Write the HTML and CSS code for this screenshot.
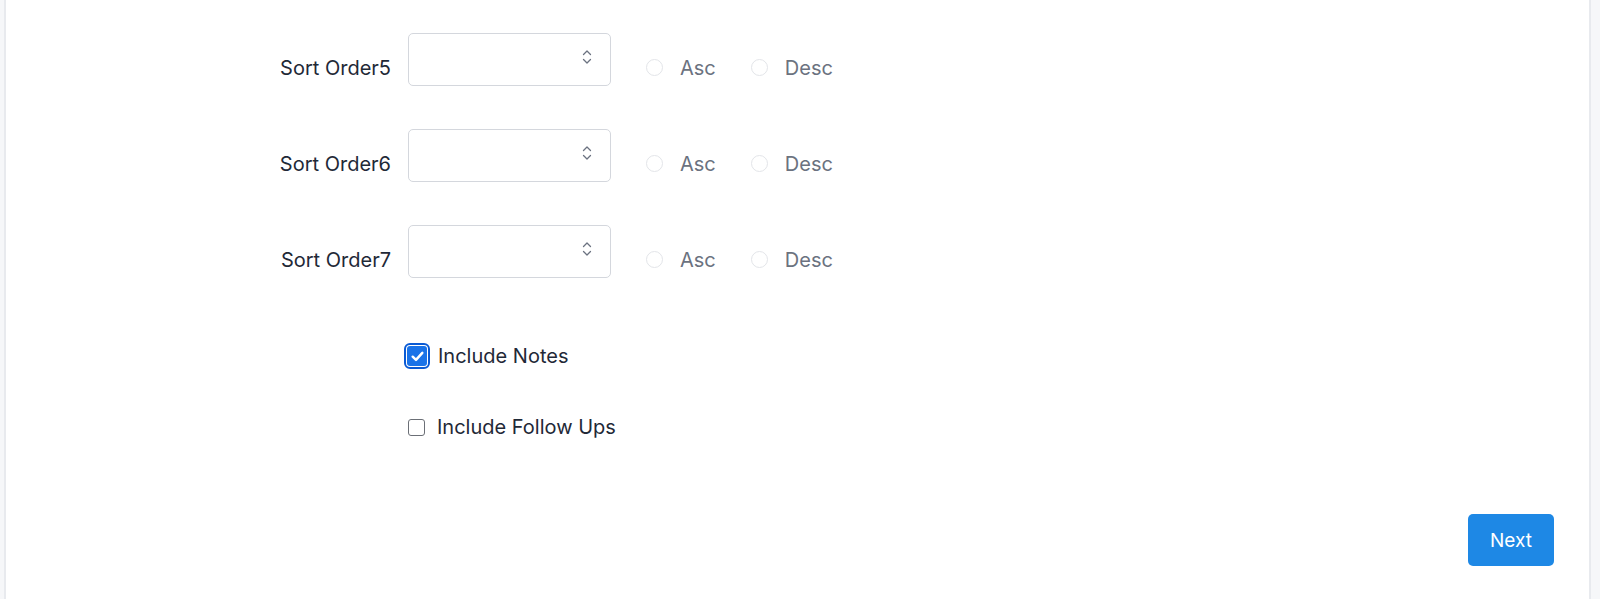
FILE: index.html
```html
<!DOCTYPE html>
<html>
<head>
<meta charset="utf-8">
<link rel="stylesheet" href="styles.css">
</head>
<body>
<div class="page">
  <div class="card">
    <div class="form">
      <div class="row">
        <label class="label">Sort Order5</label>
        <div class="select"><svg class="chev" width="10" height="16" viewBox="0 0 10 16"><path d="M1.5 5.5 L5 2 L8.5 5.5 M1.5 10.5 L5 14 L8.5 10.5" fill="none" stroke="#6b7280" stroke-width="1.3" stroke-linecap="round" stroke-linejoin="round"/></svg></div>
        <div class="radios">
          <span class="radio"></span><span class="rtext">Asc</span>
          <span class="radio"></span><span class="rtext">Desc</span>
        </div>
      </div>
      <div class="row">
        <label class="label">Sort Order6</label>
        <div class="select"><svg class="chev" width="10" height="16" viewBox="0 0 10 16"><path d="M1.5 5.5 L5 2 L8.5 5.5 M1.5 10.5 L5 14 L8.5 10.5" fill="none" stroke="#6b7280" stroke-width="1.3" stroke-linecap="round" stroke-linejoin="round"/></svg></div>
        <div class="radios">
          <span class="radio"></span><span class="rtext">Asc</span>
          <span class="radio"></span><span class="rtext">Desc</span>
        </div>
      </div>
      <div class="row">
        <label class="label">Sort Order7</label>
        <div class="select"><svg class="chev" width="10" height="16" viewBox="0 0 10 16"><path d="M1.5 5.5 L5 2 L8.5 5.5 M1.5 10.5 L5 14 L8.5 10.5" fill="none" stroke="#6b7280" stroke-width="1.3" stroke-linecap="round" stroke-linejoin="round"/></svg></div>
        <div class="radios">
          <span class="radio"></span><span class="rtext">Asc</span>
          <span class="radio"></span><span class="rtext">Desc</span>
        </div>
      </div>
      <div class="check-row first">
        <span class="cb checked"><svg width="15" height="15" viewBox="0 0 14 14"><path d="M2.5 7.2 L5.6 10.2 L11.5 3.6" fill="none" stroke="#fff" stroke-width="2.3" stroke-linecap="round" stroke-linejoin="round"/></svg></span>
        <span class="ctext">Include Notes</span>
      </div>
      <div class="check-row second">
        <span class="cb"></span>
        <span class="ctext">Include Follow Ups</span>
      </div>
    </div>
    <div class="actions">
      <button class="btn">Next</button>
    </div>
  </div>
</div>
</body>
</html>
```
FILE: styles.css
```css
html, body {
  margin: 0;
  padding: 0;
}
body {
  font-family: Inter, "Noto Sans", "Liberation Sans", sans-serif;
  color: #1f2937;
}
.page {
  height: 599px;
  background: #f6f7f9;
  padding: 0 9px 0 4px;
  display: flex;
  overflow: hidden;
}
.card {
  flex: 1;
  background: #fff;
  border-left: 2px solid #e8eaee;
  border-right: 2px solid #e8eaee;
  display: flex;
  flex-direction: column;
}
.form {
  padding-top: 33px;
}
.row {
  display: flex;
  align-items: center;
  height: 52px;
  margin-bottom: 44px;
}
.label {
  width: 385px;
  text-align: right;
  font-size: 20px;
  color: #1f2937;
  padding-top: 17px;
}
.select {
  margin-left: 17px;
  height: 51px;
  border: 1px solid #d4d7dd;
  border-radius: 5px;
  display: flex;
  align-items: center;
  justify-content: flex-end;
  padding-right: 18px;
  box-sizing: content-box;
  width: 183px;
}
.chev {
  margin-top: -4px;
}
.radios {
  display: flex;
  align-items: center;
  margin-left: 35px;
  padding-top: 17px;
}
.radio {
  width: 17px;
  height: 17px;
  border: 1px solid #e3e5e9;
  border-radius: 50%;
  box-sizing: border-box;
  background: #fff;
}
.rtext {
  font-size: 20px;
  color: #6b7280;
  margin-left: 17px;
  margin-right: 35px;
}
.check-row {
  display: flex;
  align-items: center;
  padding-left: 402px;
}
.check-row.first {
  margin-top: 66px;
  height: 26px;
}
.check-row.second {
  margin-top: 45px;
  height: 26px;
}
.cb {
  width: 17px;
  height: 17px;
  border: 1px solid #6b6f76;
  border-radius: 3px;
  box-sizing: border-box;
  margin-right: 12px;
  display: flex;
  align-items: center;
  justify-content: center;
}
.cb.checked {
  width: 20px;
  height: 20px;
  margin-left: -1px;
  margin-right: 11px;
  background: #1a73e8;
  border: none;
  outline: 2.5px solid #0a5ad4;
  outline-offset: 1px;
  border-radius: 3px;
}
.ctext {
  font-size: 20px;
  color: #1f2937;
}
.actions {
  flex: 1;
  display: flex;
  justify-content: flex-end;
  align-items: flex-end;
  padding: 0 35px 33px 0;
}
.btn {
  width: 86px;
  height: 52px;
  background: #1e88e5;
  color: #fff;
  border: none;
  border-radius: 5px;
  font-family: Inter, "Noto Sans", "Liberation Sans", sans-serif;
  font-size: 19px;
  font-weight: 400;
  padding: 0;
}
```
